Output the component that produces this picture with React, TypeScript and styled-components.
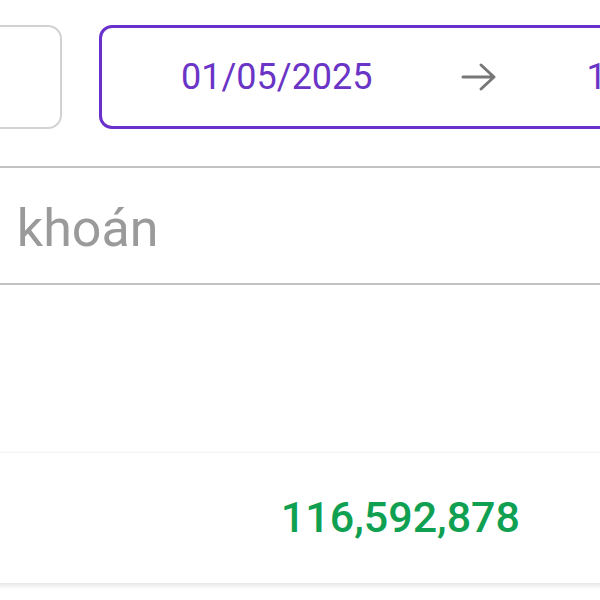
import React from "react";
import styled, { createGlobalStyle } from "styled-components";

const Global = createGlobalStyle`
  html, body { margin: 0; padding: 0; background: #ffffff; overflow: hidden; }
  body { font-family: Roboto, "Noto Sans", Arial, sans-serif; width: 600px; height: 600px; }
`;

const Screen = styled.div`
  width: 800px;
  margin-left: -60px;
  display: flex;
  flex-direction: column;
  padding-top: 25px;
`;

const FilterRow = styled.div`
  display: flex;
  align-items: stretch;
  gap: 37px;
  height: 104px;
  padding: 0 16px;
`;

const SelectBox = styled.div`
  flex: 0 0 106px;
  box-sizing: border-box;
  border: 2px solid #d2d2d2;
  border-radius: 14px;
`;

const DateBox = styled.div`
  flex: 1;
  min-width: 0;
  overflow: hidden;
  box-sizing: border-box;
  border: 3px solid #6a30cc;
  border-radius: 13px;
  display: flex;
  align-items: center;
  gap: 90px;
  padding-left: 79px;
  color: #6a34c6;
  font-size: 36px;
  white-space: nowrap;
`;

const DateText = styled.span`
  flex-shrink: 0;
`;

const Divider = styled.div<{ $top?: number }>`
  height: 2px;
  background: #c2c2c2;
  margin-top: ${(p) => p.$top ?? 0}px;
`;

const SearchRow = styled.div`
  height: 115px;
  display: flex;
  align-items: center;
  padding-left: 5px;
`;

const Placeholder = styled.span`
  font-size: 52px;
  color: #9a9a9a;
  white-space: nowrap;
  word-spacing: 1px;
  margin-top: 6px;
`;

const Spacer = styled.div`
  height: 168px;
`;

const SummaryCard = styled.div`
  height: 130px;
  background: #ffffff;
  box-shadow: 0 -1px 2px rgba(0, 0, 0, 0.05), 0 3px 5px rgba(0, 0, 0, 0.1);
  display: flex;
  align-items: center;
  justify-content: flex-end;
  padding-right: 220px;
`;

const Amount = styled.span`
  font-size: 43px;
  font-weight: 500;
  color: #10a052;
  margin-top: -3px;
`;

const Arrow = () => (
  <svg width="36" height="30" viewBox="0 0 36 30" fill="none" style={{ flexShrink: 0, marginLeft: -2 }}>
    <path
      d="M2 15H33M20 3L33 15L20 27"
      stroke="#777777"
      strokeWidth="3"
      strokeLinecap="round"
      strokeLinejoin="round"
    />
  </svg>
);

export default function App() {
  return (
    <>
      <Global />
      <Screen>
        <FilterRow>
          <SelectBox />
          <DateBox>
            <DateText>01/05/2025</DateText>
            <Arrow />
            <DateText>10/05/2025</DateText>
          </DateBox>
        </FilterRow>
        <Divider $top={37} />
        <SearchRow>
          <Placeholder>tài khoán</Placeholder>
        </SearchRow>
        <Divider />
        <Spacer />
        <SummaryCard>
          <Amount>116,592,878</Amount>
        </SummaryCard>
      </Screen>
    </>
  );
}
